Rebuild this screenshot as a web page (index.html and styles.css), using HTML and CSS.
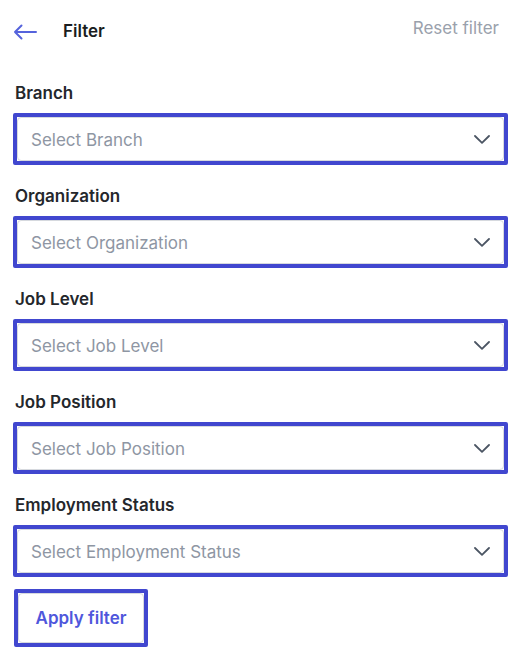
FILE: index.html
```html
<!DOCTYPE html>
<html>
<head>
<meta charset="utf-8">
<link rel="stylesheet" href="styles.css">
</head>
<body>
<div class="page">
  <header class="header">
    <div class="header-left">
      <svg class="back" width="24" height="16" viewBox="0 0 24 16"><path d="M23 8H2M8.5 1.5L2 8l6.5 6.5" fill="none" stroke="#5563dc" stroke-width="2" stroke-linecap="round" stroke-linejoin="round"/></svg>
      <span class="title">Filter</span>
    </div>
    <span class="reset">Reset filter</span>
  </header>

  <div class="field">
    <div class="label">Branch</div>
    <div class="focus"><div class="select"><span>Select Branch</span><svg class="chev" width="16" height="9" viewBox="0 0 16 9"><path d="M1 1l7 6.8L15 1" fill="none" stroke="#4b5563" stroke-width="1.8" stroke-linecap="round" stroke-linejoin="round"/></svg></div></div>
  </div>
  <div class="field">
    <div class="label">Organization</div>
    <div class="focus"><div class="select"><span>Select Organization</span><svg class="chev" width="16" height="9" viewBox="0 0 16 9"><path d="M1 1l7 6.8L15 1" fill="none" stroke="#4b5563" stroke-width="1.8" stroke-linecap="round" stroke-linejoin="round"/></svg></div></div>
  </div>
  <div class="field">
    <div class="label">Job Level</div>
    <div class="focus"><div class="select"><span>Select Job Level</span><svg class="chev" width="16" height="9" viewBox="0 0 16 9"><path d="M1 1l7 6.8L15 1" fill="none" stroke="#4b5563" stroke-width="1.8" stroke-linecap="round" stroke-linejoin="round"/></svg></div></div>
  </div>
  <div class="field">
    <div class="label">Job Position</div>
    <div class="focus"><div class="select"><span>Select Job Position</span><svg class="chev" width="16" height="9" viewBox="0 0 16 9"><path d="M1 1l7 6.8L15 1" fill="none" stroke="#4b5563" stroke-width="1.8" stroke-linecap="round" stroke-linejoin="round"/></svg></div></div>
  </div>
  <div class="field last">
    <div class="label">Employment Status</div>
    <div class="focus"><div class="select"><span>Select Employment Status</span><svg class="chev" width="16" height="9" viewBox="0 0 16 9"><path d="M1 1l7 6.8L15 1" fill="none" stroke="#4b5563" stroke-width="1.8" stroke-linecap="round" stroke-linejoin="round"/></svg></div></div>
  </div>

  <div class="btn-focus"><button class="apply">Apply filter</button></div>
</div>
</body>
</html>
```

FILE: styles.css
```css
* { box-sizing: border-box; }
html, body { margin: 0; padding: 0; background: #ffffff; }
body { font-family: Inter, "Noto Sans", Arial, sans-serif; color: #1f2328; }
.page { padding: 0 11px 0 13px; width: 519px; }
.header { height: 62px; display: flex; align-items: center; justify-content: space-between; margin-bottom: 19px; }
.header-left { display: flex; align-items: center; }
.back { display: block; margin-right: 26px; margin-top: 1px; }
.title { font-size: 17px; font-weight: 600; color: #1a1d21; }
.reset { font-size: 17px; color: #9aa1ac; margin-right: 9px; margin-top: -6px; }
.field { margin-bottom: 19px; }
.field.last { margin-bottom: 12px; }
.label { height: 24px; line-height: 24px; font-size: 17px; font-weight: 600; color: #24272c; padding-left: 2px; margin-bottom: 8px; }
.focus { border: 4px solid #4147cf; height: 52px; border-radius: 2px; }
.select { height: 44px; border: 1px solid #d6d9de; border-radius: 4px; background: #fff; display: flex; align-items: center; justify-content: space-between; padding: 0 13px 0 13px; font-size: 17px; color: #8e96a3; }
.select span { margin-top: 1px; }
.chev { display: block; }
.btn-focus { display: inline-flex; border: 4px solid #4147cf; border-radius: 2px; margin-left: 1px; }
.apply { display: block; width: 126px; height: 50px; border: 1px solid #d6d9de; border-radius: 4px; background: #fff; font-family: Inter, "Noto Sans", Arial, sans-serif; font-size: 17px; font-weight: 600; color: #4f57dc; padding: 0; }
```
